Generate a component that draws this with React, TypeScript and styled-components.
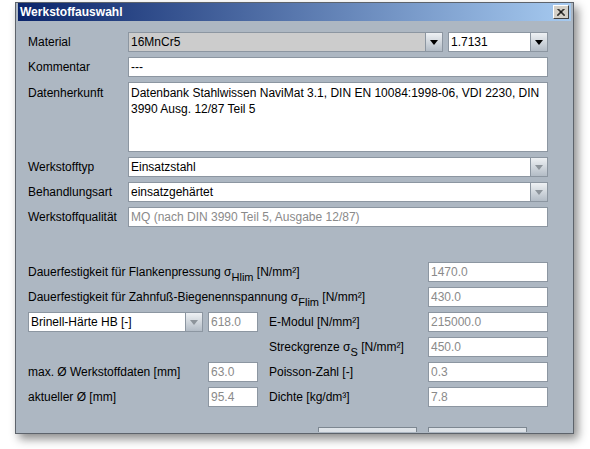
import React from 'react'
import styled, { createGlobalStyle } from 'styled-components'

const GlobalStyle = createGlobalStyle`
  html, body {
    margin: 0;
    padding: 0;
    background: #fff;
  }
  body {
    font-family: "Liberation Sans", Arial, sans-serif;
    font-size: 12px;
  }
`

const Page = styled.div`
  width: 590px;
  height: 449px;
  box-sizing: border-box;
  padding: 2px 0 0 15px;
  overflow: hidden;
  background: #fff;
`

const Window = styled.div`
  width: 559px;
  height: 432px;
  box-sizing: border-box;
  border: 1px solid #5d636b;
  background: #adb7c2;
  padding: 0 2px 1px 2px;
  box-shadow: 4px 5px 9px rgba(0, 0, 0, 0.45);
  display: flex;
  flex-direction: column;
  overflow: hidden;
`

const TitleBar = styled.div`
  height: 18px;
  flex: none;
  display: flex;
  align-items: center;
  justify-content: space-between;
  padding: 0 2px;
  background: linear-gradient(to right, #0a246a, #a6caf0);
  color: #fff;
  font-weight: bold;
  font-size: 12px;
`

const CloseButton = styled.div`
  width: 16px;
  height: 14px;
  box-sizing: border-box;
  background: #d4d0c8;
  border: 1px solid;
  border-color: #fff #404040 #404040 #fff;
  display: flex;
  align-items: center;
  justify-content: center;
`

const Body = styled.div`
  flex: 1;
  padding: 11px 23px 0 10px;
  overflow: hidden;
`

const FormGrid = styled.div`
  display: grid;
  grid-template-columns: 100px 420px;
  grid-template-rows: 20px 20px 70px 20px 20px 20px;
  row-gap: 5px;
`

const Label = styled.div<{ $top?: boolean }>`
  height: 20px;
  line-height: 20px;
  padding-top: ${p => (p.$top ? '1px' : '0')};
  white-space: nowrap;
  color: #000;
`

const Sub = styled.span`
  font-size: 11px;
  vertical-align: -5px;
  line-height: 0;
`

const TextBox = styled.div<{ $muted?: boolean; $width?: number }>`
  box-sizing: border-box;
  height: 20px;
  width: ${p => (p.$width ? `${p.$width}px` : 'auto')};
  border: 1px solid #8c96a1;
  background: #fff;
  padding-left: 2px;
  line-height: 18px;
  color: ${p => (p.$muted ? '#8a8a8a' : '#000')};
  white-space: nowrap;
  overflow: hidden;
`

const TextArea = styled.div`
  box-sizing: border-box;
  height: 70px;
  border: 1px solid #8c96a1;
  background: #fff;
  padding: 2px 2px 0 2px;
  line-height: 16px;
  color: #000;
`

const ComboRow = styled.div`
  display: flex;
  gap: 5px;
`

const Combo = styled.div<{ $width?: number; $fill?: string }>`
  box-sizing: border-box;
  display: flex;
  height: 20px;
  width: ${p => (p.$width ? `${p.$width}px` : 'auto')};
  border: 1px solid #8c96a1;
  background: ${p => p.$fill ?? '#fff'};
`

const ComboText = styled.div`
  flex: 1;
  padding-left: 2px;
  line-height: 18px;
  white-space: nowrap;
  overflow: hidden;
  color: #000;
`

const ArrowButton = styled.div<{ $disabled?: boolean }>`
  width: 16px;
  flex: none;
  border-left: 1px solid #8c96a1;
  background: linear-gradient(to bottom, #eef1f4, #b3bcc6);
  display: flex;
  align-items: center;
  justify-content: center;

  &::after {
    content: '';
    border-left: 4px solid transparent;
    border-right: 4px solid transparent;
    border-top: 5px solid ${p => (p.$disabled ? '#8d949b' : '#000')};
  }
`

const ValuesGrid = styled.div`
  margin-top: 35px;
  display: grid;
  grid-template-columns: 180px 61px 159px 120px;
  grid-auto-rows: 20px;
  row-gap: 5px;
`

const WideLabel = styled(Label)`
  grid-column: 1 / 4;
`

const ButtonRow = styled.div`
  margin-top: 20px;
  display: flex;
  justify-content: flex-end;
  gap: 11px;
  padding-right: 21px;
`

const Button = styled.div`
  width: 99px;
  height: 24px;
  box-sizing: border-box;
  border: 1px solid #7d8791;
  background: linear-gradient(to bottom, #dfe4e9, #c5ccd4);
`

const Combobox = ({ text, width, fill, disabled }: { text: string; width?: number; fill?: string; disabled?: boolean }) => (
  <Combo $width={width} $fill={fill}>
    <ComboText>{text}</ComboText>
    <ArrowButton $disabled={disabled} />
  </Combo>
)

const App = () => {
  return (
    <Page>
      <GlobalStyle />
      <Window>
        <TitleBar>
          <span>Werkstoffauswahl</span>
          <CloseButton>
            <svg width="8" height="7" viewBox="0 0 8 7">
              <path d="M0.5 0 L7.5 7 M1.5 0 L8 6.5 M7.5 0 L0.5 7 M6.5 0 L0 6.5" stroke="#000" strokeWidth="1" fill="none" />
            </svg>
          </CloseButton>
        </TitleBar>
        <Body>
          <FormGrid>
            <Label>Material</Label>
            <ComboRow>
              <Combobox text="16MnCr5" width={315} fill="#cccccc" />
              <Combobox text="1.7131" width={100} />
            </ComboRow>
            <Label>Kommentar</Label>
            <TextBox>---</TextBox>
            <Label $top>Datenherkunft</Label>
            <TextArea>Datenbank Stahlwissen NaviMat 3.1, DIN EN 10084:1998-06, VDI 2230, DIN 3990 Ausg. 12/87 Teil 5</TextArea>
            <Label>Werkstofftyp</Label>
            <Combobox text="Einsatzstahl" disabled />
            <Label>Behandlungsart</Label>
            <Combobox text="einsatzgehärtet" disabled />
            <Label>Werkstoffqualität</Label>
            <TextBox $muted>MQ (nach DIN 3990 Teil 5, Ausgabe 12/87)</TextBox>
          </FormGrid>

          <ValuesGrid>
            <WideLabel>
              Dauerfestigkeit für Flankenpressung σ<Sub>Hlim</Sub> [N/mm²]
            </WideLabel>
            <TextBox $muted>1470.0</TextBox>

            <WideLabel>
              Dauerfestigkeit für Zahnfuß-Biegenennspannung σ<Sub>Flim</Sub> [N/mm²]
            </WideLabel>
            <TextBox $muted>430.0</TextBox>

            <Combobox text="Brinell-Härte HB [-]" width={175} disabled />
            <TextBox $muted $width={50}>618.0</TextBox>
            <Label>E-Modul [N/mm²]</Label>
            <TextBox $muted>215000.0</TextBox>

            <span />
            <span />
            <Label>
              Streckgrenze σ<Sub>S</Sub> [N/mm²]
            </Label>
            <TextBox $muted>450.0</TextBox>

            <Label>max. Ø Werkstoffdaten [mm]</Label>
            <TextBox $muted $width={50}>63.0</TextBox>
            <Label>Poisson-Zahl [-]</Label>
            <TextBox $muted>0.3</TextBox>

            <Label>aktueller Ø [mm]</Label>
            <TextBox $muted $width={50}>95.4</TextBox>
            <Label>Dichte [kg/dm³]</Label>
            <TextBox $muted>7.8</TextBox>
          </ValuesGrid>

          <ButtonRow>
            <Button />
            <Button />
          </ButtonRow>
        </Body>
      </Window>
    </Page>
  )
}

export default App
